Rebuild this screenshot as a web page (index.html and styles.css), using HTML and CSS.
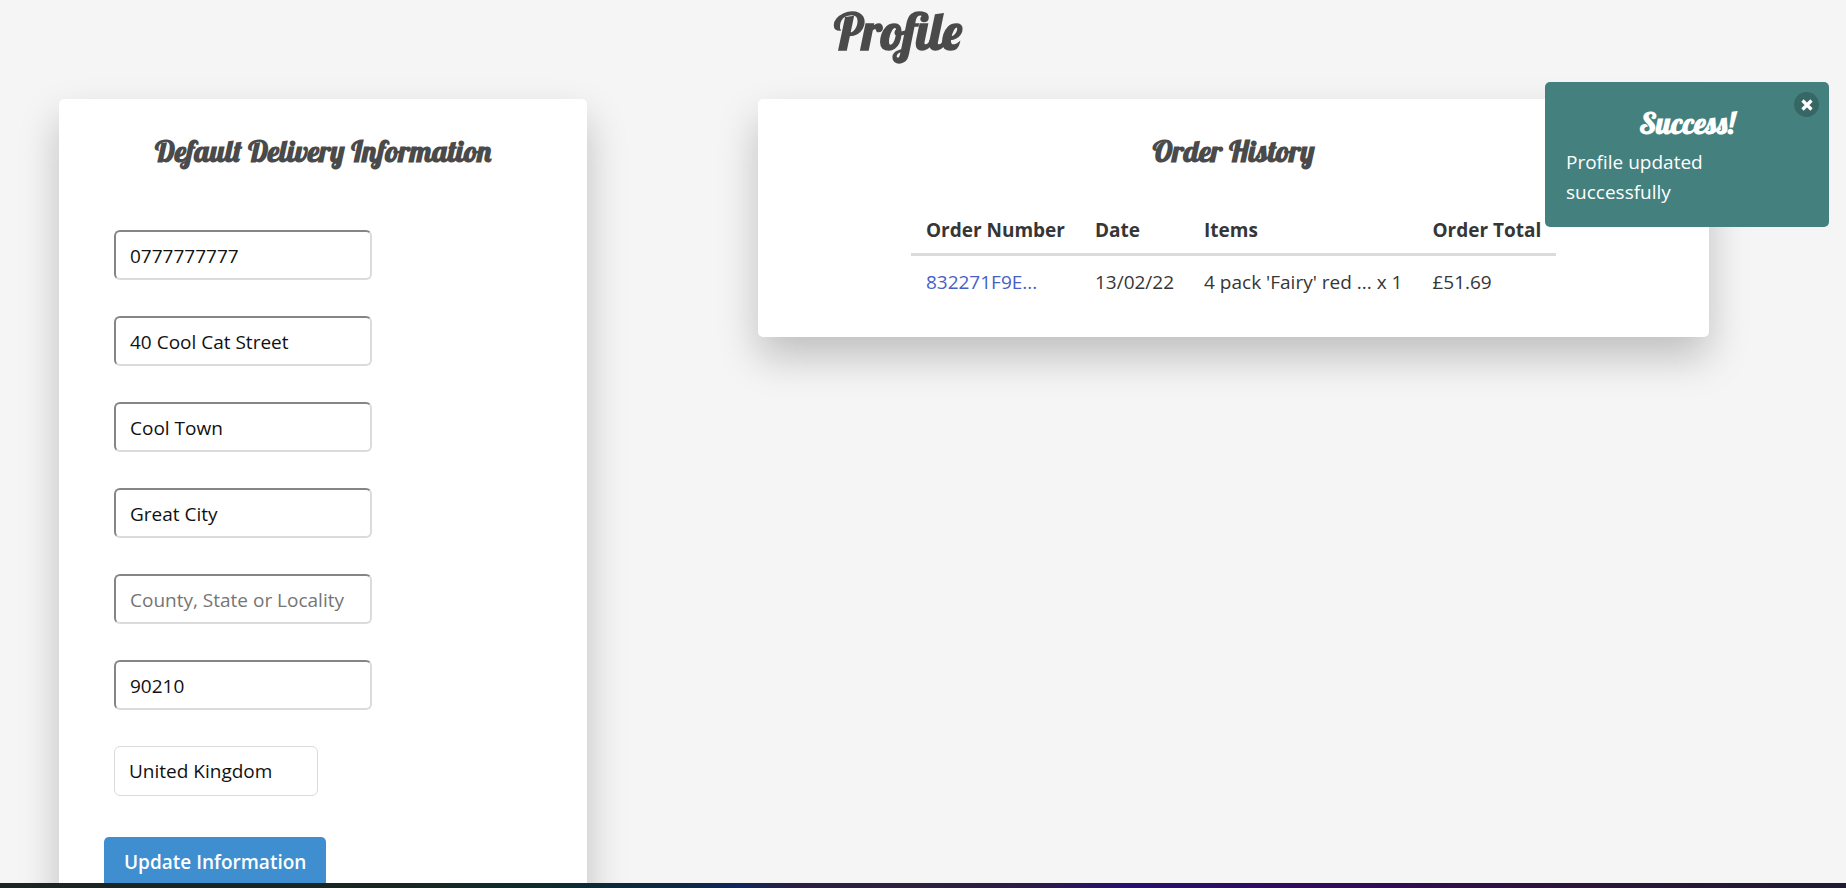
FILE: index.html
```html
<!DOCTYPE html>
<html lang="en">
<head>
<meta charset="utf-8">
<title>Profile</title>
<link rel="stylesheet" href="styles.css">
</head>
<body>
<main class="page">
  <h1 class="page-title">Profile</h1>
  <div class="columns">
    <section class="card">
      <h2 class="card-title">Default Delivery Information</h2>
      <form class="form">
        <input class="field" type="text" aria-label="Phone Number" value="0777777777">
        <input class="field" type="text" aria-label="Street Address" value="40 Cool Cat Street">
        <input class="field" type="text" aria-label="Street Address 2" value="Cool Town">
        <input class="field" type="text" aria-label="Town or City" value="Great City">
        <input class="field" type="text" aria-label="County, State or Locality" placeholder="County, State or Locality">
        <input class="field" type="text" aria-label="Postal Code" value="90210">
        <select class="field select" aria-label="Country"><option>United Kingdom</option></select>
        <button class="submit" type="button">Update Information</button>
      </form>
    </section>
    <section class="card">
      <h2 class="card-title">Order History</h2>
      <table class="orders">
        <thead>
          <tr><th>Order Number</th><th>Date</th><th>Items</th><th>Order Total</th></tr>
        </thead>
        <tbody>
          <tr><td><a href="#order">832271F9E...</a></td><td>13/02/22</td><td>4 pack 'Fairy' red ... x 1</td><td>£51.69</td></tr>
        </tbody>
      </table>
    </section>
  </div>
</main>
<aside class="toast" role="status">
  <button class="close" type="button" aria-label="Close">
    <svg viewBox="0 0 12 12" width="12" height="12"><path d="M1.5 1.5l9 9M10.500 1.500l-9 9" stroke="#fff" stroke-width="3.200"/></svg>
  </button>
  <h2 class="toast-title">Success!</h2>
  <p class="toast-text">Profile updated successfully</p>
</aside>
<div class="strip"></div>
</body>
</html>
```
FILE: styles.css
```css
* { box-sizing: border-box; }

body {
  margin: 0;
  background: #f5f5f5;
  color: #363636;
  font: 19px/30px "Segoe UI", "Open Sans", "Noto Sans", sans-serif;
}

.page {
  height: 100vh;
  overflow: hidden;
}

h1, h2 {
  margin: 0;
  font-family: Lobster, "Liberation Serif", serif;
  font-weight: 700;
  text-align: center;
  color: #4a4a4a;
}

.page-title {
  padding-right: 50px;
  font-size: 50px;
  line-height: 64px;
}

.columns {
  display: grid;
  grid-template-columns: 5fr 9fr;
  gap: 171px;
  align-items: start;
  padding: 35px 137px 40px 59px;
}

.card {
  padding: 32px 45px 30px;
  background: #fff;
  border-radius: 5px;
  box-shadow: 0 20px 40px rgba(0, 0, 0, 0.22);
}

.card-title {
  font-size: 30px;
  line-height: 40px;
}

.form {
  display: flex;
  flex-direction: column;
  align-items: flex-start;
  gap: 36px;
  padding: 59px 10px 0;
}

.field {
  width: 258px;
  height: 50px;
  padding: 2px 14px 0;
  border: 2px solid #dbdbdb;
  border-top-color: #858585;
  border-left-color: #858585;
  border-radius: 6px;
  background: #fff;
  color: #111;
  font: inherit;
}

.field::placeholder {
  color: #757575;
}

.select {
  width: 204px;
  padding: 0 14px;
  border: 1px solid #dbdbdb;
  appearance: none;
}

.submit {
  height: 50px;
  margin: 5px -10px 0;
  padding: 0 20px;
  border: 0;
  border-radius: 5px;
  background: #3e8ed0;
  color: #fff;
  font: inherit;
  font-weight: 600;
}

.orders {
  margin: 40px auto 0;
  border-collapse: collapse;
}

.orders td {
  padding: 11px 15px 10px;
  white-space: nowrap;
}

.orders th {
  padding: 4px 15px 8px;
  border-bottom: 3px solid #dbdbdb;
  font-weight: 700;
  text-align: left;
  white-space: nowrap;
}

.orders a {
  color: #485fc7;
  text-decoration: none;
}

.toast {
  position: absolute;
  top: 82px;
  right: 17px;
  width: 284px;
  padding: 23px 50px 20px 21px;
  border-radius: 5px;
  background: #43807e;
  color: #fff;
}

.toast-title {
  margin-right: -29px;
  font-size: 30px;
  line-height: 36px;
  color: #fff;
}

.toast-text {
  margin: 6px 0 0;
}

.close {
  position: absolute;
  top: 10px;
  right: 10px;
  display: grid;
  place-items: center;
  width: 25px;
  height: 25px;
  padding: 0;
  border: 0;
  border-radius: 50%;
  background: #366765;
}

.strip {
  position: fixed;
  inset: auto 0 0;
  height: 5px;
  background: linear-gradient(90deg, #1a2424 0%, #182622 22%, #0d2b2e 30%, #0c2845 37%, #10265a 40%, #2a1f42 43%, #2c223c 50%, #2c1a48 56%, #270f6e 61%, #2e0c60 69%, #300d50 76%, #2b1638 86%, #1f1b30 100%);
}
```
